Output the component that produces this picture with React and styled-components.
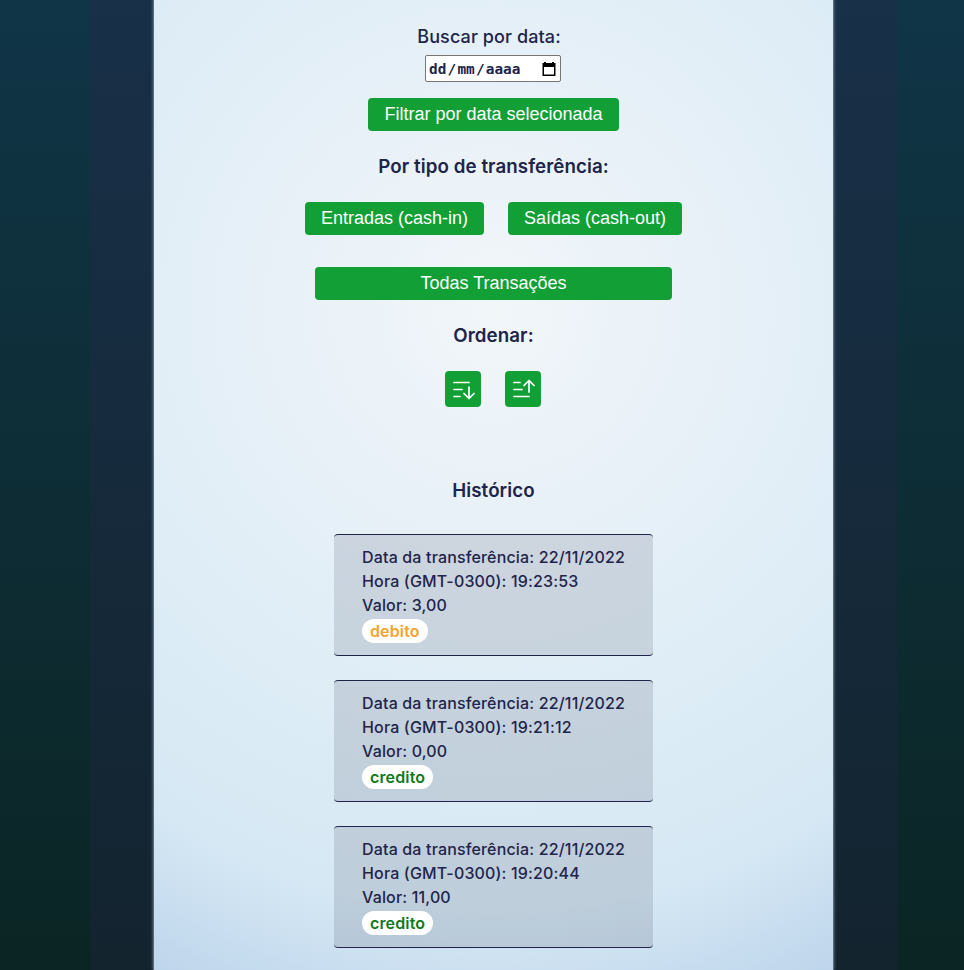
import React from "react";
import styled, { createGlobalStyle } from "styled-components";

const GlobalStyle = createGlobalStyle`
  * { box-sizing: border-box; }
  body {
    margin: 0;
    color: #21244a;
    font-family: Inter, sans-serif;
    font-size: 16px;
    font-weight: 500;
    line-height: 24px;
  }
`;

const Page = styled.div`
  display: flex;
  height: 970px;
  overflow: hidden;
  padding: 0 67px 0 90px;
  background: linear-gradient(#103547, #0b2524);
`;

const Band = styled.div`
  flex: 1;
  display: flex;
  padding: 0 63px;
  background: linear-gradient(#183048, #13242f);
`;

const Panel = styled.main`
  flex: 1;
  display: flex;
  flex-direction: column;
  align-items: center;
  border: 1px solid #5a6c7b;
  border-width: 0 1px;
  padding-top: 25px;
  box-shadow: 0 0 3px #657985;
  background: radial-gradient(circle at 50% 310px, #f1f6f9 0, #e9f1f8 200px, #deedf6 410px, #d6e8f4 600px, #bcd4eb 750px);
`;

const Label = styled.label`
  height: 24px;
  padding: 0 9px 0 0;
  font-size: 18px;
  letter-spacing: 0.1px;
`;

const DateInput = styled.div`
  display: flex;
  align-items: center;
  justify-content: space-between;
  width: 136px;
  height: 27px;
  margin: 6px 1px 16px 0;
  padding: 1px 4px 0 3px;
  border: 1px solid #767676;
  border-radius: 2px;
  background: #fff;
  font: bold 14.4px "DejaVu Sans Mono", monospace;
`;

const DateParts = styled.span`
  display: flex;
  gap: 1.2px;
`;

const Title = styled.h2`
  margin: 0;
  height: 24px;
  font-size: 18.72px;
  font-weight: 600;
  line-height: 24px;
  letter-spacing: 0.09px;
`;

const Button = styled.button`
  display: flex;
  align-items: center;
  justify-content: center;
  width: ${(p) => p.$width}px;
  height: ${(p) => p.$height || 33}px;
  padding: 0 0 1px;
  border: 0;
  border-radius: 4px;
  background: #12a036;
  color: #fff;
  font: 18px "Liberation Sans", Arial, sans-serif;
`;

const ButtonRow = styled.div`
  display: flex;
  gap: 24px;
  margin: ${(p) => p.$margin};
`;

const History = styled.ul`
  display: flex;
  flex-direction: column;
  gap: 24px;
  margin: 31px 0 0;
  padding: 0;
  list-style: none;
`;

const Card = styled.li`
  width: 319px;
  height: 122px;
  padding: 10px 28px;
  border: 0 solid #21244a;
  border-width: 1px 0;
  border-radius: 4px;
  background: rgba(32, 33, 54, 0.13);
`;

const Line = styled.p`
  margin: 0;
  white-space: nowrap;
  letter-spacing: 0.16px;
`;

const Badge = styled.span`
  display: block;
  width: fit-content;
  height: 24px;
  margin-top: 2px;
  padding: 0 8px;
  border-radius: 12px;
  background: #fff;
  color: ${(p) => (p.$kind === "debito" ? "#f5a32f" : "#0f7a1c")};
  font-weight: 600;
  letter-spacing: 0.14px;
`;

const CalendarIcon = () => (
  <svg width="14" height="15" viewBox="0 0 14 15" fill="#000">
    <path d="M2 0h2v1h6V0h2v1h1.5v13H.5V1H2zM2 5v7.5h10V5z" fillRule="evenodd" />
  </svg>
);

const SortIcon = ({ up }) => (
  <svg width="24" height="24" viewBox="0 0 24 24" fill="none" stroke="#fff" strokeWidth="1.7" strokeLinecap="round" strokeLinejoin="round">
    {up ? (
      <path d="M3 5.5h6M3 12.5h8M3 19.5h15M18 15V3.5M13 8.5l5-5 5 5" />
    ) : (
      <path d="M3 5.5h15M3 12.5h8M3 19.5h6M18 10v11.5M13 16.5l5 5 5-5" />
    )}
  </svg>
);

const transactions = [
  { time: "19:23:53", value: "3,00", kind: "debito" },
  { time: "19:21:12", value: "0,00", kind: "credito" },
  { time: "19:20:44", value: "11,00", kind: "credito" },
];

export default function App() {
  return (
    <>
      <GlobalStyle />
      <Page>
        <Band>
          <Panel>
            <Label>Buscar por data:</Label>
            <DateInput>
              <DateParts>
                <span>dd</span><span>/</span><span>mm</span><span>/</span><span>aaaa</span>
              </DateParts>
              <CalendarIcon />
            </DateInput>
            <Button $width={251}>Filtrar por data selecionada</Button>
            <ButtonRow $margin="24px 0 0"><Title>Por tipo de transferência:</Title></ButtonRow>
            <ButtonRow $margin="23px 0 32px">
              <Button $width={179}>Entradas (cash-in)</Button>
              <Button $width={174}>Saídas (cash-out)</Button>
            </ButtonRow>
            <Button $width={357}>Todas Transações</Button>
            <ButtonRow $margin="24px 0 0"><Title>Ordenar:</Title></ButtonRow>
            <ButtonRow $margin="23px 1px 72px 0">
              <Button $width={36} $height={36} aria-label="Decrescente"><SortIcon /></Button>
              <Button $width={36} $height={36} aria-label="Crescente"><SortIcon up /></Button>
            </ButtonRow>
            <Title>Histórico</Title>
            <History>
              {transactions.map((t) => (
                <Card key={t.time}>
                  <Line>Data da transferência: 22/11/2022</Line>
                  <Line>Hora (GMT-0300): {t.time}</Line>
                  <Line>Valor: {t.value}</Line>
                  <Badge $kind={t.kind}>{t.kind}</Badge>
                </Card>
              ))}
            </History>
          </Panel>
        </Band>
      </Page>
    </>
  );
}
